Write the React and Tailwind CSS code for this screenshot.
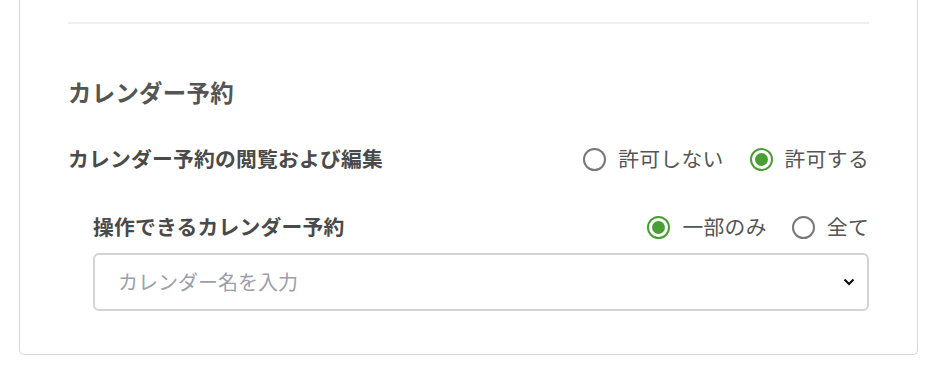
import React, { useState } from "react";

const font = { fontFamily: '"Noto Sans CJK JP", "Noto Sans", sans-serif' };

function Radio({ checked, label, onClick }) {
  return (
    <label className="flex items-center cursor-pointer" onClick={onClick}>
      <span
        className={
          "flex h-[23px] w-[23px] items-center justify-center rounded-full border-2 " +
          (checked ? "border-[#4a9e36]" : "border-[#777777]")
        }
      >
        {checked && <span className="h-[13px] w-[13px] rounded-full bg-[#4a9e36]" />}
      </span>
      <span className="ml-[12px] text-[20.8px] tracking-[0.3px] text-[#555555]">{label}</span>
    </label>
  );
}

export default function App() {
  const [allow, setAllow] = useState(true);
  const [scope, setScope] = useState("some");

  return (
    <div className="h-[374px] w-[938px] bg-white" style={font}>
      <div className="ml-[19px] w-[899px] rounded-b-[5px] border-x border-b border-[#d6d6d6] px-[48px] pt-[22px] pb-[43px]">
        <div className="h-[2px] bg-[#efefef]" />

        <h3 className="mt-[50px] h-[36px] text-[23.4px] font-bold leading-[36px] tracking-[0.3px] text-[#555555]">
          カレンダー予約
        </h3>

        <div className="mt-[31px] flex h-[36px] items-center justify-between">
          <span className="text-[20.8px] font-bold tracking-[0.2px] text-[#4a4a4a]">
            カレンダー予約の閲覧および編集
          </span>
          <div className="flex items-center gap-[26px]">
            <Radio checked={!allow} label="許可しない" onClick={() => setAllow(false)} />
            <Radio checked={allow} label="許可する" onClick={() => setAllow(true)} />
          </div>
        </div>

        <div className="ml-[25px]">
          <div className="mt-[32px] flex h-[36px] items-center justify-between">
            <span className="text-[20.8px] font-bold tracking-[0.2px] text-[#4a4a4a]">
              操作できるカレンダー予約
            </span>
            <div className="flex items-center gap-[25px]">
              <Radio checked={scope === "some"} label="一部のみ" onClick={() => setScope("some")} />
              <Radio checked={scope === "all"} label="全て" onClick={() => setScope("all")} />
            </div>
          </div>

          <div className="mt-[8px] flex h-[58px] items-center justify-between rounded-[6px] border-2 border-[#d3d3d3] pl-[23px] pr-[12px]">
            <span className="text-[20px] text-[#9aa0ab]">カレンダー名を入力</span>
            <svg width="12" height="8" viewBox="0 0 12 8" fill="none">
              <path d="M1.5 1.5L6 6L10.5 1.5" stroke="#111" strokeWidth="2.2" />
            </svg>
          </div>
        </div>
      </div>
    </div>
  );
}
